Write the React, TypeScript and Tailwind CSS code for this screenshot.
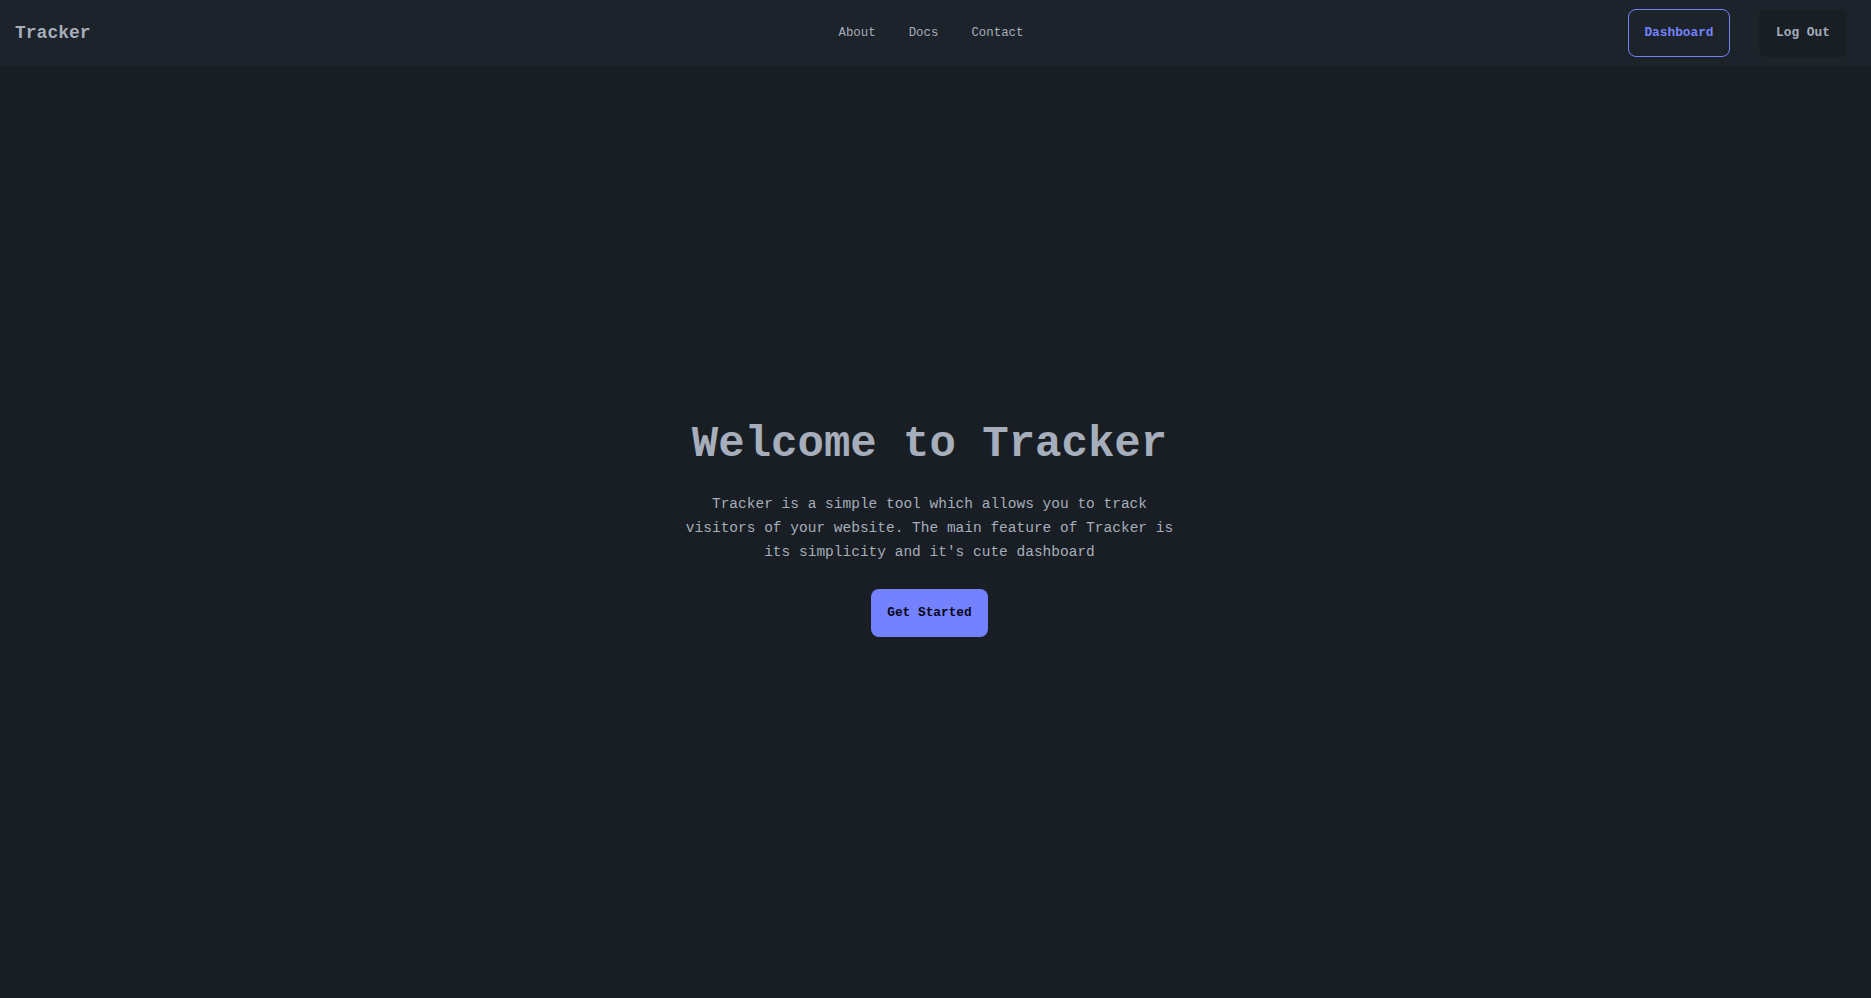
import React from 'react'

const mono = { fontFamily: '"Liberation Mono", "DejaVu Sans Mono", monospace' }

function Navbar() {
  return (
    <nav className="flex h-[66px] items-center bg-[#1d232a] pl-[15px] pr-[24px]">
      <div className="flex-1">
        <a className="text-[18px] font-bold text-[#a6adbb]">Tracker</a>
      </div>

      <ul className="flex items-center gap-[33px] text-[12.4px] text-[#a6adbb]">
        <li>About</li>
        <li>Docs</li>
        <li>Contact</li>
      </ul>

      <div className="flex flex-1 items-center justify-end gap-[29px]">
        <button className="h-[48px] w-[102px] rounded-lg border border-[#7582ff] text-[12.8px] font-bold text-[#7582ff]">
          Dashboard
        </button>
        <button className="h-[48px] w-[88px] rounded-lg bg-[#191e24] text-[12.8px] font-bold text-[#a6adbb]">
          Log Out
        </button>
      </div>
    </nav>
  )
}

function Hero() {
  return (
    <main className="flex flex-1 items-center justify-center bg-[#191e24] pr-[12px] pb-[8px]">
      <div className="flex flex-col items-center text-center">
        <h1 className="text-[44px] leading-[48px] font-bold text-[#a6adbb]">
          Welcome to Tracker
        </h1>

        <p className="mt-[24px] w-[500px] text-[14.5px] leading-6 text-[#a6adbb]">
          Tracker is a simple tool which allows you to track visitors of your website. The main
          feature of Tracker is its simplicity and it's cute dashboard
        </p>

        <button className="mt-[25px] h-[48px] w-[117px] rounded-lg bg-[#7582ff] text-[12.8px] font-bold text-[#050617]">
          Get Started
        </button>
      </div>
    </main>
  )
}

export default function App() {
  return (
    <div className="flex h-screen flex-col bg-[#191e24]" style={mono}>
      <Navbar />
      <Hero />
    </div>
  )
}
